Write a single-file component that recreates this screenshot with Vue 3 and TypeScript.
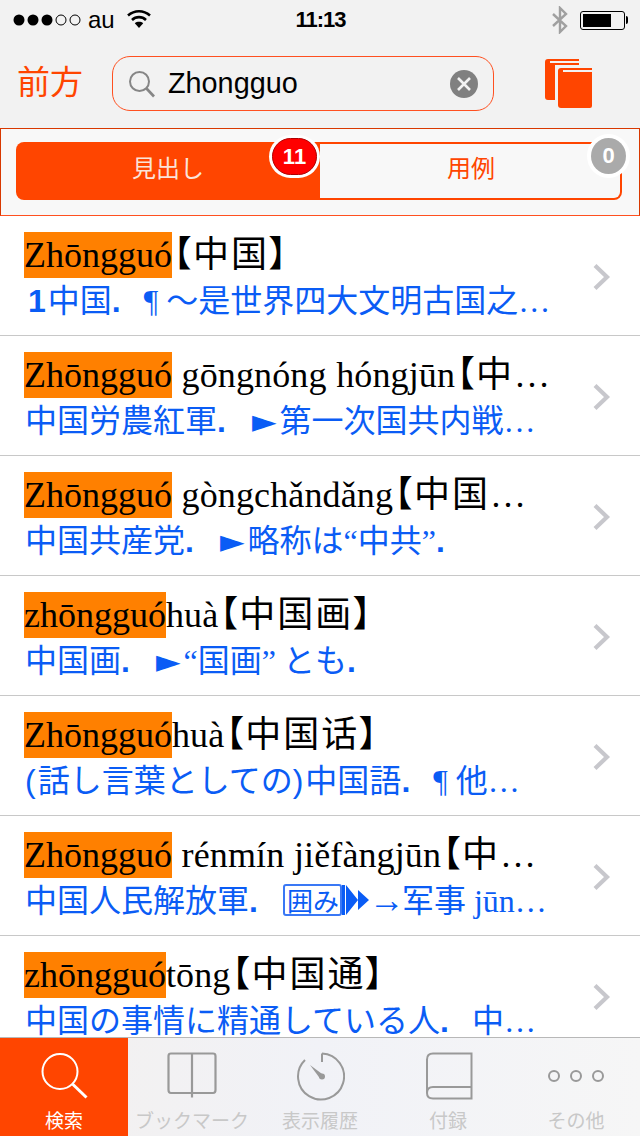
<script setup lang="ts">
type Part = { t: string; c?: string }
type Row = { mark: string; pin: string; cjk: string; body: Part[] }

const dot: Part = { t: '.', c: 'dot' }
const tri: Part = { t: '►', c: 'tri' }
const more: Part = { t: '…', c: 'ser' }
const open: Part = { t: '“', c: 'ser' }
const close: Part = { t: '”', c: 'ser' }

const rows: Row[] = [
  { mark: 'Zhōngguó', pin: '', cjk: '【中国】', body: [{ t: '1', c: 'num' }, { t: '中国' }, dot, { t: '¶', c: 'ser pil' }, { t: '～是世界四大文明古国之' }, more] },
  { mark: 'Zhōngguó', pin: ' gōngnóng hóngjūn', cjk: '【中…', body: [{ t: '中国労農紅軍' }, dot, tri, { t: '第一次国共内戦' }, more] },
  { mark: 'Zhōngguó', pin: ' gòngchǎndǎng', cjk: '【中国…', body: [{ t: '中国共産党' }, dot, tri, { t: '略称は' }, open, { t: '中共' }, close, dot] },
  { mark: 'zhōngguó', pin: 'huà', cjk: '【中国画】', body: [{ t: '中国画' }, dot, tri, open, { t: '国画' }, close, { t: ' とも' }, dot] },
  { mark: 'Zhōngguó', pin: 'huà', cjk: '【中国话】', body: [{ t: '(', c: 'par' }, { t: '話し言葉としての' }, { t: ')', c: 'par' }, { t: '中国語' }, dot, { t: '¶', c: 'ser pil' }, { t: '他' }, more] },
  { mark: 'Zhōngguó', pin: ' rénmín jiěfàngjūn', cjk: '【中…', body: [{ t: '中国人民解放軍' }, dot, { t: '囲み', c: 'box' }, { t: '', c: 'play' }, { t: '→', c: 'arrow' }, { t: '军事' }, { t: ' jūn…', c: 'ser' }] },
  { mark: 'zhōngguó', pin: 'tōng', cjk: '【中国通】', body: [{ t: '中国の事情に精通している人' }, dot, { t: '中' }, more] }
]
</script>

<template>
  <div class="phone">
    <header class="status">
      <div class="st-left">
        <svg width="72" height="16" viewBox="0 0 72 16">
          <circle cx="6" cy="8" r="5.5" fill="#000" />
          <circle cx="20" cy="8" r="5.5" fill="#000" />
          <circle cx="34" cy="8" r="5.5" fill="#000" />
          <circle cx="48" cy="8" r="5" fill="none" stroke="#000" />
          <circle cx="62" cy="8" r="5" fill="none" stroke="#000" />
        </svg>
        <span class="carrier">au</span>
        <svg class="wifi" width="26" height="20" viewBox="0 0 26 20">
          <path d="M2 6.5C8.5 0.8 17.5 0.8 24 6.5" fill="none" stroke="#000" stroke-width="2.6" />
          <path d="M6 11C10 7.2 16 7.2 20 11" fill="none" stroke="#000" stroke-width="2.6" />
          <path d="M13 19L8.8 14.2C11 12.4 15 12.4 17.2 14.2Z" fill="#000" />
        </svg>
      </div>
      <div class="time">11:13</div>
      <div class="st-right">
        <svg width="18" height="28" viewBox="0 0 18 28">
          <path d="M2 8L15 20L9 26V2L15 8L2 20" fill="none" stroke="#a0a0a0" stroke-width="2.4" />
        </svg>
        <div class="battery"><div class="level"></div></div>
        <div class="nub"></div>
      </div>
    </header>

    <nav class="nav">
      <span class="back">前方</span>
      <div class="search">
        <svg width="28" height="28" viewBox="0 0 28 28">
          <circle cx="11.5" cy="11.5" r="9.5" fill="none" stroke="#868686" stroke-width="2" />
          <path d="M18.5 18.5L26 26.5" stroke="#868686" stroke-width="2.6" />
        </svg>
        <span class="query">Zhongguo</span>
        <svg width="28" height="28" viewBox="0 0 28 28">
          <circle cx="14" cy="14" r="14" fill="#808080" />
          <path d="M8 8L20 20M20 8L8 20" stroke="#f2f2f2" stroke-width="2.6" />
        </svg>
      </div>
      <svg class="books" width="48" height="50" viewBox="0 0 48 50">
        <path d="M0 3Q0 0 3 0H34V2H5V4H34V34H0Z" fill="#ff4500" />
        <path d="M0 31H14V41H3Q0 41 0 38Z" fill="#ff4500" />
        <rect x="10" y="6" width="38" height="44" fill="#f2f2f2" />
        <path d="M13 12Q13 9 16 9H47V11H18V13H47V47Q47 49 45 49H16Q13 49 13 46Z" fill="#ff4500" />
      </svg>
    </nav>

    <section class="segment">
      <div class="seg seg-on">
        <span>見出し</span>
        <b class="badge badge-red">11</b>
      </div>
      <div class="seg seg-off">
        <span>用例</span>
        <b class="badge badge-gray">0</b>
      </div>
    </section>

    <main class="list">
      <article v-for="(row, i) in rows" :key="i" class="row">
        <div class="texts">
          <div class="head"><mark class="hit">{{ row.mark }}</mark><span class="pin">{{ row.pin }}</span><span class="cjk">{{ row.cjk }}</span></div>
          <div class="body">
            <template v-for="(p, j) in row.body" :key="j">
              <svg v-if="p.c === 'play'" class="play" width="27" height="30" viewBox="0 0 27 30">
                <path d="M0 0H3V30H0ZM4 0L16 15L4 30ZM16 5L27 15L16 25Z" fill="#0a5cf5" />
              </svg>
              <span v-else :class="p.c">{{ p.t }}</span>
            </template>
          </div>
        </div>
        <svg class="chev" width="20" height="28" viewBox="0 0 20 28">
          <path d="M3 2.5L15 14L3 25.5" fill="none" stroke="#c7c7cc" stroke-width="4.2" />
        </svg>
      </article>
    </main>

    <footer class="tabs">
      <div class="tab tab-on">
        <svg width="50" height="50" viewBox="0 0 50 50">
          <circle cx="21" cy="19.5" r="17.5" fill="none" stroke="#fff" stroke-width="2" />
          <path d="M33.5 32L47.5 45.5" stroke="#fff" stroke-width="3" />
        </svg>
        <span>検索</span>
      </div>
      <div class="tab">
        <svg width="50" height="50" viewBox="0 0 50 50">
          <path d="M25 1.5H4Q1.5 1.5 1.5 4V38Q1.5 41 4 41H46Q48.5 41 48.5 38V4Q48.5 1.5 46 1.5H25V45.5" fill="none" stroke="#999" stroke-width="2.2" />
        </svg>
        <span>ブックマーク</span>
      </div>
      <div class="tab">
        <svg width="50" height="50" viewBox="0 0 50 50">
          <path d="M27 1.5A23 23 0 1 1 10 8" fill="none" stroke="#999" stroke-width="2" />
          <path d="M27 1.5V10" stroke="#999" stroke-width="2" />
          <path d="M15 13L28.5 23L25 26.5Z" fill="#999" />
          <circle cx="27" cy="24.5" r="3" fill="#999" />
        </svg>
        <span>表示履歴</span>
      </div>
      <div class="tab">
        <svg width="50" height="50" viewBox="0 0 50 50">
          <path d="M48.5 35H10Q4 35 4 41Q4 46.5 10 46.5H48.5V1.5H10Q4 1.5 4 7.5V41" fill="none" stroke="#999" stroke-width="2" />
        </svg>
        <span>付録</span>
      </div>
      <div class="tab">
        <svg width="58" height="50" viewBox="0 0 58 50">
          <circle cx="7" cy="24" r="5" fill="none" stroke="#999" stroke-width="2" />
          <circle cx="29" cy="24" r="5" fill="none" stroke="#999" stroke-width="2" />
          <circle cx="51" cy="24" r="5" fill="none" stroke="#999" stroke-width="2" />
        </svg>
        <span>その他</span>
      </div>
    </footer>
  </div>
</template>

<style>
html, body { margin: 0; background: #fff; }
</style>

<style scoped>
.phone {
  width: 640px;
  height: 1136px;
  display: flex;
  flex-direction: column;
  overflow: hidden;
  font-family: "Liberation Sans", "Noto Sans CJK JP", sans-serif;
  background: #fff;
}
.status {
  height: 40px;
  flex: none;
  background: #f2f2f2;
  display: grid;
  grid-template-columns: 1fr auto 1fr;
  align-items: center;
  padding: 0 12px 0 13px;
}
.st-left { display: flex; align-items: center; }
.carrier { font-size: 24px; margin-left: 3px; line-height: 40px; }
.wifi { margin-left: 11px; margin-top: -3px; }
.time { font-size: 22px; font-weight: 700; color: #000; letter-spacing: -1px; }
.st-right { display: flex; align-items: center; justify-content: flex-end; }
.st-right svg { margin-right: 11px; }
.battery {
  width: 39px;
  height: 13px;
  border: 1px solid #000;
  border-radius: 3px;
  padding: 2px;
  display: flex;
}
.level { width: 28px; background: #000; }
.nub { width: 2px; height: 8px; background: #000; border-radius: 0 3px 3px 0; margin-left: 1px; }

.nav {
  height: 88px;
  flex: none;
  background: #f2f2f2;
  display: flex;
  align-items: center;
  padding-left: 17px;
}
.back { color: #ff4500; font-size: 33px; line-height: 1; width: 95px; margin-top: -4px; }
.search {
  width: 382px;
  height: 55px;
  box-sizing: border-box;
  border: 1.5px solid #ff5020;
  border-radius: 18px;
  display: flex;
  align-items: center;
  padding: 0 15px;
  margin-top: -1px;
}
.query { font-size: 28.8px; margin-left: 12px; flex: 1; color: #000; }
.books { margin-left: 51px; margin-top: -1px; }

.segment {
  height: 88px;
  box-sizing: border-box;
  flex: none;
  border: 1px solid #d83800;
  border-bottom-color: #ff5020;
  background: #f8f8f8;
  display: flex;
  padding: 13px 17px 15px 15px;
}
.seg {
  position: relative;
  display: flex;
  align-items: center;
  justify-content: center;
  font-size: 24px;
  box-sizing: border-box;
}
.seg span { margin-bottom: 10px; }
.seg-on { flex: none; width: 304px; background: #ff4500; color: #fbe3d8; border-radius: 8px 0 0 8px; }
.seg-off { flex: 1; color: #ff4500; border: 2px solid #ff4500; border-left: 0; border-radius: 0 8px 8px 0; padding-left: 2px; }
.badge {
  position: absolute;
  box-sizing: border-box;
  display: flex;
  align-items: center;
  justify-content: center;
  font-size: 22px;
  color: #fff;
}
.badge-red {
  right: 3px;
  top: -4px;
  width: 45px;
  height: 37px;
  border-radius: 19px;
  background: #f00;
  border: 1px solid #b00000;
  box-shadow: 0 0 0 3px #fff;
}
.badge-gray {
  right: -6px;
  top: -6px;
  width: 35px;
  height: 36px;
  border-radius: 50%;
  background: #aaa;
  box-shadow: 0 0 0 4px #fff;
}

.list { flex: 1; min-height: 0; }
.row {
  height: 120px;
  box-sizing: border-box;
  border-bottom: 1px solid #c8c8c8;
  padding: 16px 28px 0 24px;
  display: flex;
  justify-content: space-between;
}
.row:last-child { height: 101px; border-bottom: 0; }
.texts { min-width: 0; }
.head {
  font-family: "Liberation Serif", "Noto Sans CJK SC", serif;
  font-size: 36px;
  line-height: 46px;
  height: 46px;
  white-space: pre;
  color: #000;
}
.hit { background: #ff8000; color: #000; display: inline-block; }
.pin { word-spacing: 0.5px; letter-spacing: 0.12px; }
.cjk { font-feature-settings: "palt"; letter-spacing: 2px; padding-left: 1px; }
.body {
  font-size: 32px;
  line-height: 32px;
  height: 32px;
  margin: 4px 0 0 1px;
  white-space: pre;
  color: #0a5cf5;
  font-family: "Noto Sans CJK JP", "Liberation Sans", sans-serif;
}
.num { font-family: "Liberation Sans", sans-serif; font-weight: 700; margin: 0 2px 0 3px; }
.dot { font-family: "Liberation Sans", sans-serif; font-weight: 700; margin-right: 23px; }
.ser { font-family: "Liberation Serif", serif; }
.pil { margin-right: 8px; }
.par { font-family: "Liberation Sans", sans-serif; margin: 0 2px 0 0; }
.tri { margin: 0 3px; font-family: "DejaVu Sans", sans-serif; }
.box {
  font-size: 26px;
  line-height: 28px;
  border: 2px solid #3a78f5;
  border-radius: 3px;
  padding: 0 1px 0 2px;
  margin-left: 2px;
  display: inline-block;
  vertical-align: 1px;
}
.play { vertical-align: -3px; }
.arrow { font-family: "Liberation Serif", serif; font-size: 36px; line-height: 32px; margin-right: -3px; }
.chev { align-self: flex-start; margin-top: 31px; }

.tabs {
  position: relative;
  height: 99px;
  flex: none;
  box-sizing: border-box;
  border-top: 1px solid #b8b8b8;
  background: linear-gradient(90deg, #f3f0ee, #f1f2f7 50%, #f6f6f6);
  display: flex;
}
.tab {
  width: 128px;
  display: flex;
  flex-direction: column;
  align-items: center;
  color: #c8c8c8;
  font-size: 19px;
  padding-top: 14px;
  box-sizing: border-box;
  white-space: nowrap;
}
.tab span { line-height: 26px; margin-top: 7px; }
.tab-on { background: #ff4500; color: #fff; }
</style>
